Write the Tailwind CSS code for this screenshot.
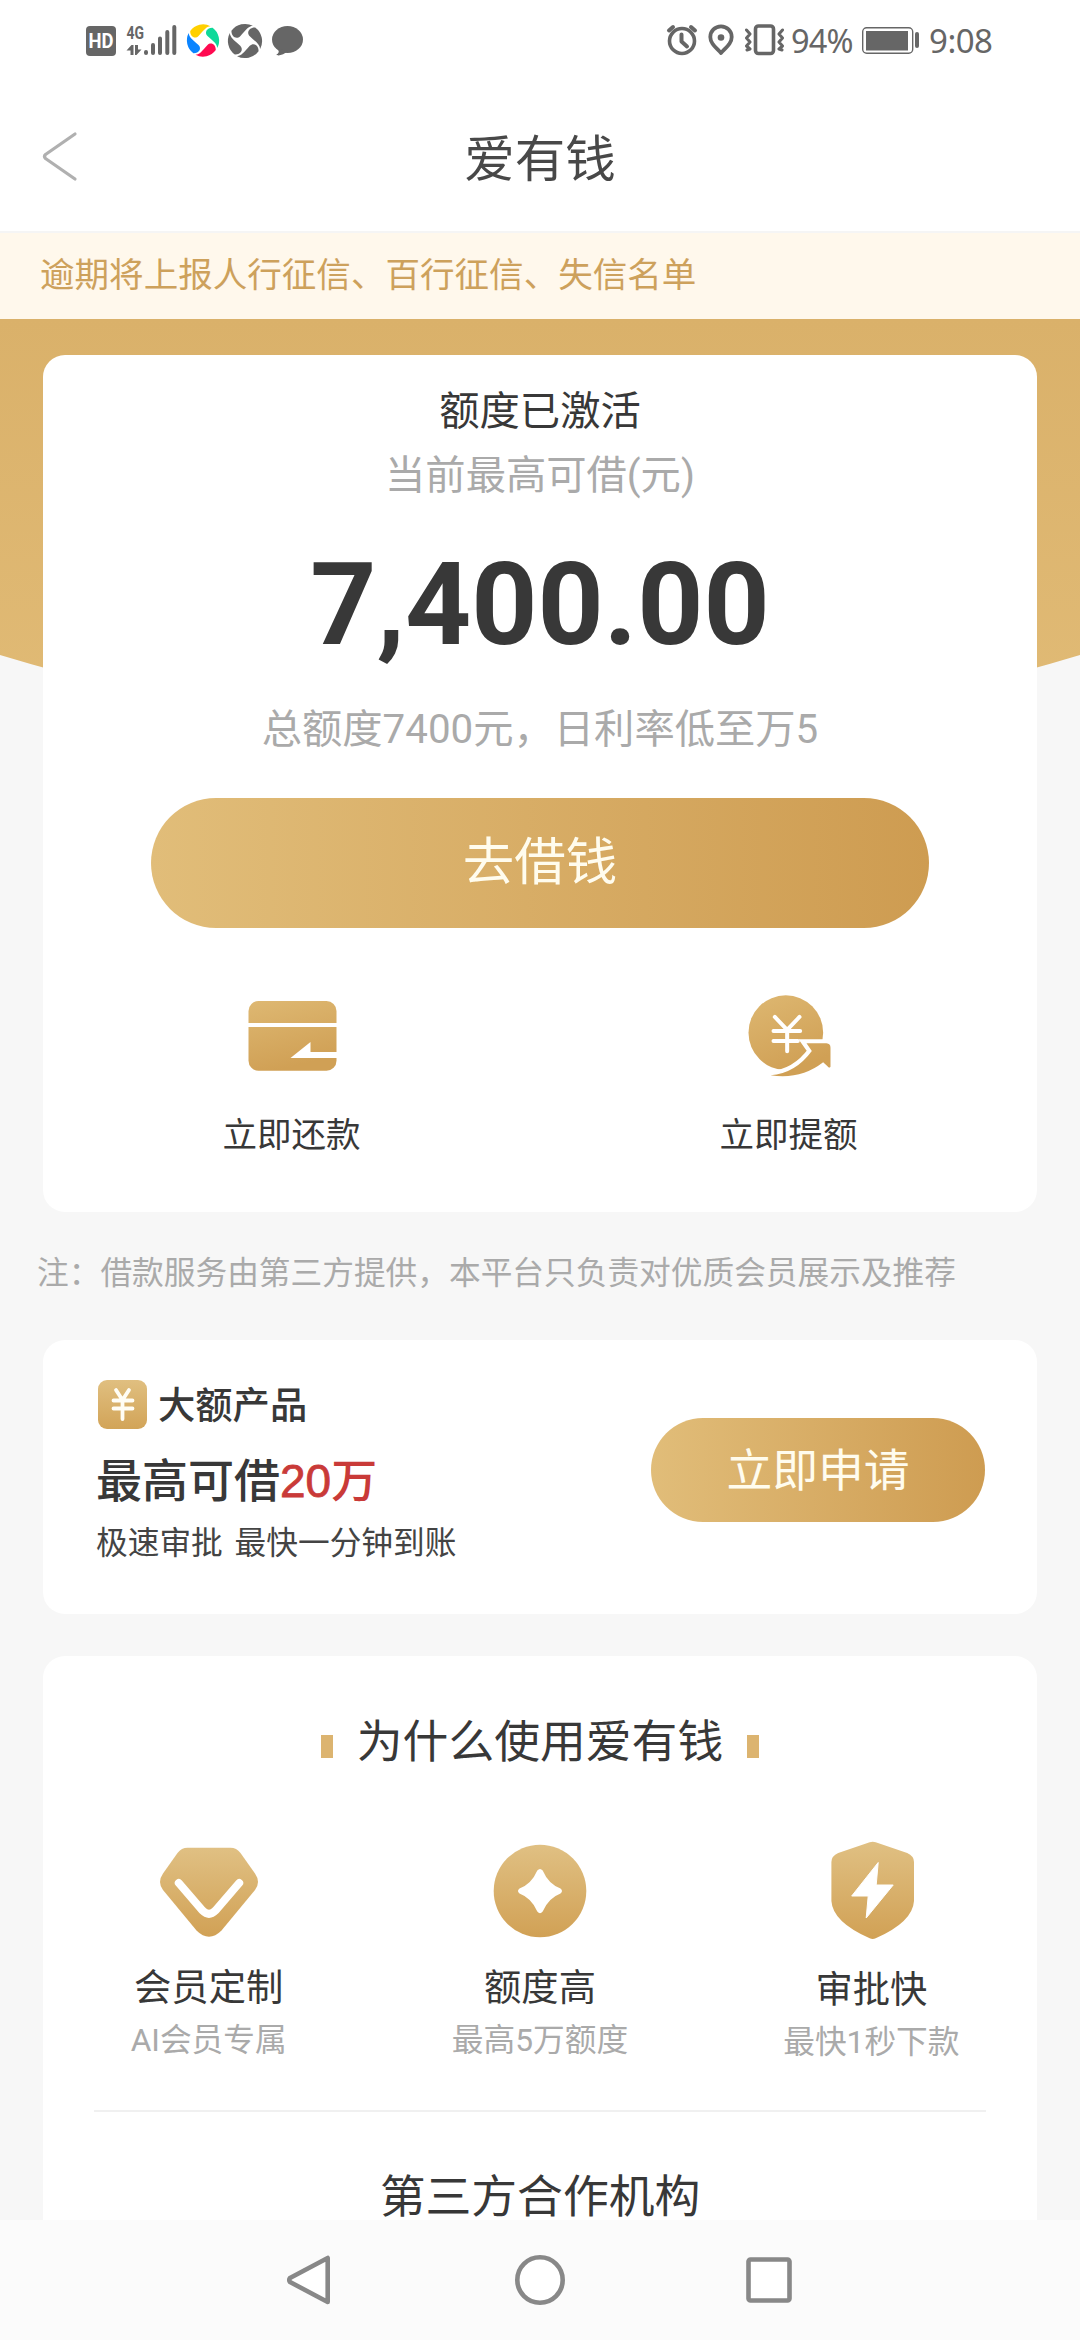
<!DOCTYPE html>
<html lang="zh-CN">
<head>
<meta charset="utf-8">
<title>爱有钱</title>
<script src="https://cdn.jsdelivr.net/npm/@tailwindcss/browser@4"></script>
</head>
<body class="w-[1080px] h-[2340px] overflow-hidden bg-[#f7f7f7] flex flex-col font-['Roboto','Noto_Sans_CJK_SC',sans-serif] text-[#383838]">

<!-- status bar -->
<div class="h-20 shrink-0 bg-white flex items-start text-[#666]">
  <svg class="w-[320px] h-20 shrink-0" viewBox="0 0 320 80" fill="currentColor">
    <rect x="86" y="26" width="30" height="30" rx="4"/>
    <text x="88.5" y="48" font-family="Roboto" font-weight="700" font-size="20" fill="#fff" textLength="25" lengthAdjust="spacingAndGlyphs">HD</text>
    <text x="126.5" y="38.5" font-family="Roboto" font-weight="700" font-size="19" textLength="17.5" lengthAdjust="spacingAndGlyphs">4G</text>
    <path d="M126.500 50.500L131.500 45H133.500V55H130.500V50.500ZM135 45H138V49.500H141.500L136.500 55H135Z"/>
    <g stroke="currentColor" stroke-width="4" stroke-linecap="round"><path d="M146 52V53M153 45V53M160 38.500V53M167.300 32V53M174.300 27V53"/></g>
    <g transform="translate(203 40.500)">
      <path fill="#ffd000" d="M-12.800-9.600A16 16 0 0 1 7.500-14.300C3-13.800 1.500-11 -4.500-4.500C-8-1-13-4-12.800-9.600Z"/>
      <path fill="#0fd99a" transform="rotate(90)" d="M-12.800-9.600A16 16 0 0 1 7.500-14.300C3-13.800 1.500-11 -4.500-4.500C-8-1-13-4-12.800-9.600Z"/>
      <path fill="#ff0a50" transform="rotate(180)" d="M-12.800-9.600A16 16 0 0 1 7.500-14.300C3-13.800 1.500-11 -4.500-4.500C-8-1-13-4-12.800-9.600Z"/>
      <path fill="#0a84ff" transform="rotate(270)" d="M-12.800-9.600A16 16 0 0 1 7.500-14.300C3-13.800 1.500-11 -4.500-4.500C-8-1-13-4-12.800-9.600Z"/>
    </g>
    <g transform="translate(245 41) scale(1.060)">
      <path d="M-12.800-9.600A16 16 0 0 1 7.500-14.300C3-13.800 1.500-11 -4.500-4.500C-8-1-13-4-12.800-9.600Z"/>
      <path transform="rotate(90)" d="M-12.800-9.600A16 16 0 0 1 7.500-14.300C3-13.800 1.500-11 -4.500-4.500C-8-1-13-4-12.800-9.600Z"/>
      <path transform="rotate(180)" d="M-12.800-9.600A16 16 0 0 1 7.500-14.300C3-13.800 1.500-11 -4.500-4.500C-8-1-13-4-12.800-9.600Z"/>
      <path transform="rotate(270)" d="M-12.800-9.600A16 16 0 0 1 7.500-14.300C3-13.800 1.500-11 -4.500-4.500C-8-1-13-4-12.800-9.600Z"/>
    </g>
    <ellipse cx="287.500" cy="39.500" rx="15.500" ry="13.500"/>
    <path d="M278 49C279.500 52 278.500 53.500 276.500 54.500C277 56.500 284 55 288 51Z"/>
  </svg>
  <svg class="ml-auto w-[130px] h-20 shrink-0" viewBox="660 0 130 80" fill="none" stroke="currentColor" stroke-width="3.600" stroke-linecap="round" stroke-linejoin="round">
    <circle cx="682" cy="41" r="12.500"/>
    <path d="M669 30.500L673 27M695 30.500L691 27" stroke-width="4"/>
    <path d="M681.500 34.500V41.500L687 46.500" stroke-width="4"/>
    <path d="M721 53C715 46.500 710.300 43 710.300 37A10.700 10.700 0 0 1 731.700 37C731.700 43 727 46.500 721 53Z" stroke-width="3.800"/>
    <circle cx="721" cy="37.500" r="3.300" fill="currentColor" stroke="none"/>
    <rect x="755.500" y="26" width="18" height="27.500" rx="3"/>
    <path d="M746.500 30L750 34L746.500 38L750 42L746.500 46L750 49L747 50M782.500 30L779 34L782.500 38L779 42L782.500 46L779 49L782 50" stroke-width="3"/>
  </svg>
  <span class="w-[70px] pl-px mr-px pt-[17px] leading-[48px] text-[32.500px] font-['Noto_Sans'] tracking-[-0.8px] whitespace-nowrap">94%</span>
  <svg class="w-[54px] h-20 shrink-0" viewBox="861 0 54 80" fill="none" stroke="currentColor">
    <rect x="862.700" y="27.700" width="50" height="25.600" rx="4" stroke-width="1.400"/>
    <rect x="866" y="31" width="42" height="19.500" fill="currentColor" stroke="none"/>
  </svg>
  <span class="w-1 h-4 mt-8 rounded-full bg-[#666]"></span>
  <span class="ml-[10px] w-[151px] pt-[17px] leading-[48px] text-[33px] font-['Noto_Sans'] tracking-[-0.5px]">9:08</span>
</div>

<!-- title bar -->
<header class="h-[153px] shrink-0 bg-white border-b-2 border-[#f5f5f5] flex items-start">
  <svg class="w-[120px] h-[153px]" viewBox="0 80 120 153" fill="none" stroke="#b0b0b0" stroke-width="3.200" stroke-linecap="round" stroke-linejoin="round"><path d="M75 134L45.500 154.500Q43.500 156.500 45.500 158.500L75 179"/></svg>
  <h1 class="flex-1 text-center mt-[50px] mr-[120px] leading-[60px] text-[50.500px] text-[#484848]">爱有钱</h1>
</header>

<!-- overdue notice -->
<div class="h-[86px] shrink-0 bg-[#fff8ec] pl-[40px] leading-[85px] text-[34.560px] text-[#cda15c]">逾期将上报人行征信、百行征信、失信名单</div>

<main class="relative h-[1901px] shrink-0 overflow-hidden flex flex-col px-[43px] pt-9">
  <svg class="absolute left-0 top-0 w-[1080px] h-[440px]" viewBox="0 0 1080 440">
    <defs><linearGradient id="hero" x1="0" y1="0" x2="0" y2="1"><stop offset="0" stop-color="#dab16a"/><stop offset="1" stop-color="#e1bb76"/></linearGradient></defs>
    <path fill="url(#hero)" d="M0 0H1080V336Q810 418 540 418Q270 418 0 336Z"/>
  </svg>

  <!-- quota card -->
  <section class="relative h-[857px] shrink-0 rounded-[22px] bg-white flex flex-col items-center pt-[27px]">
    <p class="leading-[60px] text-[40.300px]">额度已激活</p>
    <p class="mt-1 leading-[60px] text-[40.300px] text-[#aaa]">当前最高可借(元)</p>
    <p class="mt-[39px] leading-[120px] text-[115.500px] font-bold">7,400.00</p>
    <p class="mt-[35px] leading-[60px] text-[40.300px] text-[#aaa]">总额度7400元，日利率低至万5</p>
    <button class="mt-[38px] w-[778px] h-[130px] shrink-0 rounded-full bg-linear-to-r from-[#e1bd79] to-[#ce9c51] text-[51.500px] text-[#fffcee] leading-[126px] pb-px">去借钱</button>
    <div class="mt-[57px] w-full grid grid-cols-2 text-[34.560px]">
      <div class="flex flex-col items-center">
        <svg class="w-[100px] h-[100px]" viewBox="241.500 985 100 100">
          <defs><linearGradient id="g1" x1="0" y1="0" x2=".3" y2="1"><stop offset="0" stop-color="#deb872"/><stop offset="1" stop-color="#d0a055"/></linearGradient></defs>
          <rect x="248" y="1001" width="88" height="69.700" rx="10" fill="url(#g1)"/>
          <path fill="#fff" d="M247 1023H337V1027H247ZM290 1058L310 1042V1052H337V1058Z"/>
        </svg>
        <span class="mt-[25px] leading-[50px]">立即还款</span>
      </div>
      <div class="flex flex-col items-center">
        <svg class="w-[100px] h-[100px]" viewBox="738.500 985 100 100">
          <defs><linearGradient id="g2" gradientUnits="userSpaceOnUse" x1="70" y1="75" x2="170" y2="320"><stop offset="0" stop-color="#deb872"/><stop offset="1" stop-color="#d0a055"/></linearGradient></defs>
          <g transform="translate(720 970) scale(.3333)">
            <circle cx="196" cy="188" r="112" fill="url(#g2)"/>
            <path d="M163 141L200 180L237 141M200 180V244M159 183H239M159 213H232" fill="none" stroke="#fff" stroke-width="12" stroke-linecap="round" stroke-linejoin="round"/>
            <path d="M150 316Q225 310 274 243L258 220H318Q330 221 330 233V290Q326 296 321 289L308 277Q240 330 150 316Z" fill="#fff" stroke="#fff" stroke-width="25"/>
            <path d="M150 316Q225 310 274 243L258 220H318Q330 221 330 233V290Q326 296 321 289L308 277Q240 330 150 316Z" fill="url(#g2)"/>
          </g>
        </svg>
        <span class="mt-[25px] leading-[50px]">立即提额</span>
      </div>
    </div>
  </section>

  <p class="relative mt-[37px] -ml-[6px] shrink-0 leading-[50px] text-[31.700px] text-[#aaa] whitespace-nowrap">注：借款服务由第三方提供，本平台只负责对优质会员展示及推荐</p>

  <!-- large loan card -->
  <section class="mt-[41px] h-[274px] shrink-0 rounded-[22px] bg-white flex justify-between items-start pl-[53px] pr-[52px]">
    <div class="pt-10 flex flex-col">
      <div class="flex h-[49px] items-center gap-[11px]">
        <svg class="ml-0.5 w-[49px] h-[49px]" viewBox="0 0 49 49">
          <defs><linearGradient id="g3" x1="0" y1="0" x2="0" y2="1"><stop offset="0" stop-color="#e0bf80"/><stop offset="1" stop-color="#d2a458"/></linearGradient></defs>
          <rect width="49" height="49" rx="9" fill="url(#g3)"/>
          <path d="M18 10L24.500 20L31 10M24.500 20V39M15.500 20.500H34.500M15.500 28.500H34.500" fill="none" stroke="#fffdf5" stroke-width="3.800" stroke-linecap="round" stroke-linejoin="round"/>
        </svg>
        <span class="leading-[49px] pt-[4px] text-[37.300px] font-medium">大额产品</span>
      </div>
      <p class="mt-[22px] leading-[60px] text-[46px] font-medium">最高可借<span class="text-[#c93a38]"><span class="font-['Liberation_Sans'] font-normal [-webkit-text-stroke:0.8px_#c93a38]">20</span>万</span></p>
      <p class="mt-[11px] leading-[44px] text-[31.700px] text-[#444] [word-spacing:4px]">极速审批 最快一分钟到账</p>
    </div>
    <button class="mt-[78px] w-[334px] h-[104px] rounded-full bg-linear-to-r from-[#e1bd79] to-[#ce9c51] text-[45.800px] text-[#fffcee] leading-[104px] pt-[2px]">立即申请</button>
  </section>

  <!-- reasons card -->
  <section class="mt-[42px] h-[640px] shrink-0 rounded-[22px] bg-white flex flex-col pt-[57px]">
    <div class="flex justify-center items-center gap-6 leading-[60px] text-[45.800px]">
      <i class="w-3 h-[23px] mt-[7px] bg-[#dcb470]"></i><h2>为什么使用爱有钱</h2><i class="w-3 h-[23px] mt-[7px] bg-[#dcb470]"></i>
    </div>
    <div class="mt-[63px] grid grid-cols-3 text-[37.300px]">
      <div class="flex flex-col items-center">
        <svg class="w-[110px] h-[110px]" viewBox="153.500 1836 110 110">
          <defs><linearGradient id="g4" x1="0" y1="0" x2="0" y2="1"><stop offset="0" stop-color="#e0c083"/><stop offset="1" stop-color="#d1a155"/></linearGradient></defs>
          <path fill="url(#g4)" d="M187 1847.700H230Q236 1847.700 240 1853L254.500 1873.500Q260.500 1882 254.500 1890L221 1930.500Q208.500 1943 196 1930.500L162.500 1890Q156.500 1882 162.500 1873.500L177 1853Q181 1847.700 187 1847.700Z"/>
          <path d="M178.300 1883L202 1910.500Q208.500 1917 215 1910.500L238.700 1883" fill="none" stroke="#fff" stroke-width="8" stroke-linecap="round"/>
        </svg>
        <span class="mt-[17px] leading-[50px]">会员定制</span>
        <span class="mt-[6px] leading-[44px] text-[31.700px] text-[#aaa]">AI会员专属</span>
      </div>
      <div class="flex flex-col items-center">
        <svg class="w-[110px] h-[110px]" viewBox="485 1836 110 110">
          <circle cx="540" cy="1891" r="46.300" fill="url(#g4)"/>
          <path fill="#fff" d="M537.300 1870.500Q540 1867.500 542.700 1870.500Q548.500 1884 560.500 1888.500Q563.500 1891 560.500 1893.500Q548.500 1898 542.700 1911.500Q540 1915 537.300 1911.500Q531.500 1898 519.500 1893.500Q516.500 1891 519.500 1888.500Q531.500 1884 537.300 1870.500Z"/>
        </svg>
        <span class="mt-[17px] leading-[50px]">额度高</span>
        <span class="mt-[6px] leading-[44px] text-[31.700px] text-[#aaa]">最高5万额度</span>
      </div>
      <div class="flex flex-col items-center">
        <svg class="w-[110px] h-[110px]" viewBox="816.300 1836 110 110">
          <path fill="url(#g4)" d="M870 1842.300Q873 1841 876 1842.300L907.500 1853Q914.300 1856 914.300 1862V1901Q913 1922 876 1938.300Q873 1939.700 870 1938.300Q833 1922 831.700 1901V1862Q831.700 1856 838.500 1853Z"/>
          <path fill="#fff" stroke="#fff" stroke-linejoin="round" d="M878.500 1862.500L876.500 1885H893.500L866.500 1918L868.500 1896H852Z"/>
        </svg>
        <span class="mt-[19px] leading-[50px]">审批快</span>
        <span class="mt-[6px] leading-[44px] text-[31.700px] text-[#aaa]">最快1秒下款</span>
      </div>
    </div>
    <hr class="mt-[45px] mx-[51px] border-t-2 border-[#f0f0f0]">
    <h2 class="mt-[64px] text-center leading-[44px] text-[45.800px]">第三方合作机构</h2>
  </section>
</main>

<!-- system navigation -->
<nav class="h-[120px] shrink-0 bg-[#fbfbfb] grid grid-cols-[1fr_160px_1fr] items-center text-[#888]">
  <svg class="justify-self-end mr-[122px] w-[60px] h-[60px]" viewBox="278 2250 60 60" fill="#fff" stroke="currentColor" stroke-width="4.600" stroke-linejoin="round"><path d="M327.700 2258V2302L290 2282Q288.500 2280 290 2278Z"/></svg>
  <svg class="justify-self-center w-[60px] h-[60px]" viewBox="0 0 60 60" fill="#fff" stroke="currentColor" stroke-width="4.600"><circle cx="30" cy="30" r="22.700"/></svg>
  <svg class="ml-[119px] w-[60px] h-[60px]" viewBox="739 2250 60 60" fill="#fff" stroke="currentColor" stroke-width="4.600"><rect x="748.500" y="2259.500" width="41" height="41" rx="2"/></svg>
</nav>
</body>
</html>
